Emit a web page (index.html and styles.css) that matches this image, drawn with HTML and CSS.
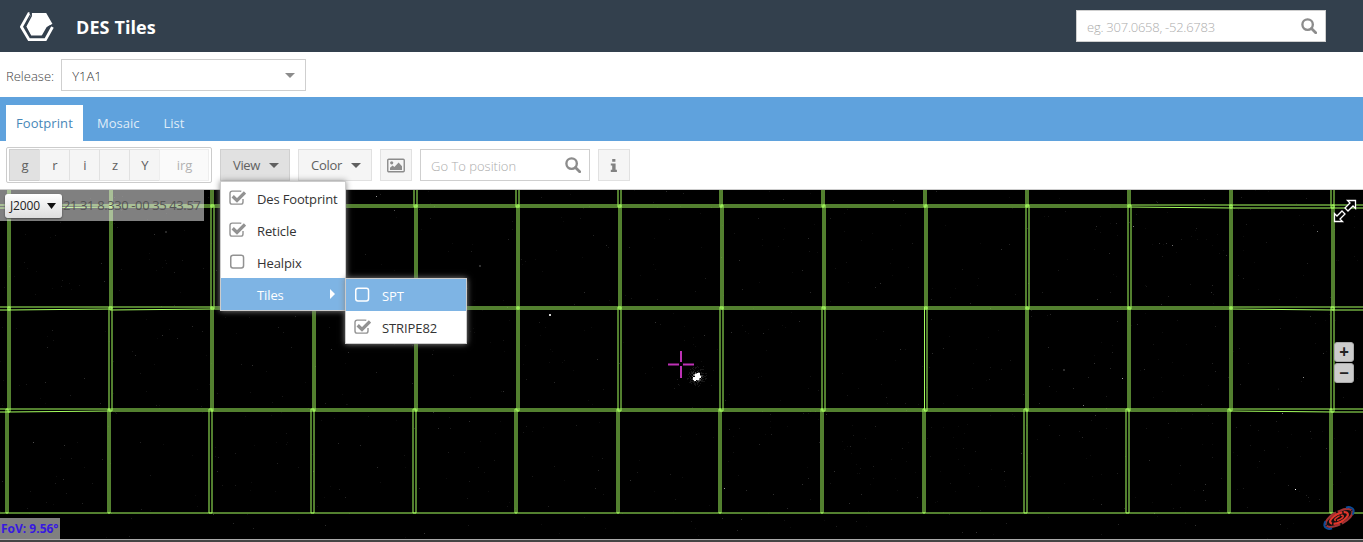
FILE: index.html
```html
<!DOCTYPE html>
<html lang="en">
<head>
<meta charset="utf-8">
<title>DES Tiles</title>
<link rel="stylesheet" href="styles.css">
</head>
<body>
<svg class="defs" width="0" height="0" aria-hidden="true">
  <symbol id="search" viewBox="0 0 15 15"><circle cx="6.2" cy="6.2" r="4.9" fill="none" stroke="currentColor" stroke-width="2.2"/><path d="M9.8 9.8l4 4" stroke="currentColor" stroke-width="2.6" stroke-linecap="round"/></symbol>
  <symbol id="caret" viewBox="0 0 10 5"><path d="M0 0h10L5 5z" fill="currentColor"/></symbol>
  <symbol id="box" viewBox="0 0 17 15"><rect x="1.75" y="1.25" width="12.8" height="12.8" rx="2.2" fill="none" stroke="currentColor" stroke-width="1.5"/></symbol>
  <symbol id="checked" viewBox="0 0 17 15"><path d="M12.3 1.400Q11.8 1.100 11 1.100H3.200Q1 1.100 1 3.300V11.900Q1 14.100 3.200 14.100H11.800Q14 14.100 14 11.900V9" fill="none" stroke="currentColor" stroke-width="1.400"/><path d="M3.700 6.300l4.300 4.200L16 2.500" fill="none" stroke="currentColor" stroke-width="3.300"/></symbol>
</svg>
<header class="header">
  <svg class="logo" width="34" height="30" viewBox="0 0 34 30">
    <path d="M11.500 1h14.700l6.300 11-5.800 3-5.200 9H11L6 14.500z" fill="#fff"/>
    <path d="M9.500 1.600H8.800L1.400 14.800 9 27.600h16.500l7-12.600" fill="none" stroke="#fff" stroke-width="2.800"/>
    <path d="M11.200 0v4L5.500 14.600l5.200 9.600h13l5.300-9.600 4.800-2.200" fill="none" stroke="#34404e" stroke-width="1.400"/>
  </svg>
  <h1 class="title">DES Tiles</h1>
  <div class="field header-search"><span>eg. 307.0658, -52.6783</span><svg width="16" height="16"><use href="#search"/></svg></div>
</header>
<div class="release">
  <label>Release:</label>
  <div class="field combo"><span>Y1A1</span><svg width="10" height="5"><use href="#caret"/></svg></div>
</div>
<nav class="tabs"><a class="tab active">Footprint</a><a class="tab">Mosaic</a><a class="tab">List</a></nav>
<div class="toolbar">
  <div class="bands"><b class="btn pressed">g</b><b class="btn">r</b><b class="btn">i</b><b class="btn">z</b><b class="btn">Y</b><b class="btn off">irg</b></div>
  <div class="menu-anchor">
    <button class="btn pressed view">View<svg width="10" height="5"><use href="#caret"/></svg></button>
    <div class="menu view-menu">
      <div class="item"><svg width="17" height="15"><use href="#checked"/></svg><span class="long">Des Footprint</span></div>
      <div class="item"><svg width="17" height="15"><use href="#checked"/></svg><span>Reticle</span></div>
      <div class="item"><svg width="17" height="15"><use href="#box"/></svg><span>Healpix</span></div>
      <div class="item selected"><svg width="17" height="15"></svg><span>Tiles</span><svg class="arrow" width="5" height="10"><path d="M0 0l5 5-5 5z" fill="#fff"/></svg></div>
    </div>
    <div class="menu sub-menu">
      <div class="item selected"><svg width="17" height="15"><use href="#box"/></svg><span>SPT</span></div>
      <div class="item"><svg width="17" height="15"><use href="#checked"/></svg><span>STRIPE82</span></div>
    </div>
  </div>
  <button class="btn color">Color<svg width="10" height="5"><use href="#caret"/></svg></button>
  <button class="btn square"><svg width="18" height="15" viewBox="0 0 18 15"><rect x=".75" y="1.25" width="16.5" height="12.5" rx="1" fill="none" stroke="#8c8c8c" stroke-width="1.4"/><circle cx="4.7" cy="4.8" r="1.6" fill="#8c8c8c"/><path d="M3 12V9.8l2.600-2.200 1.800 1.400 4.200-4.400L15 8.300V12z" fill="#8c8c8c"/></svg></button>
  <div class="field goto"><span>Go To position</span><svg width="16" height="16"><use href="#search"/></svg></div>
  <button class="btn square"><svg width="8" height="13" viewBox="0 0 8 13"><path d="M2.200 0h3.200v2.700H2.200zM.8 4.400h4.800v6.400h1.300V13H.8v-2.200h1.400V6.600H.8z" fill="#828282"/></svg></button>
</div>
<main class="map">
  <svg class="sky" id="sky" width="1363" height="349" viewBox="0 190 1363 349"></svg>
  <div class="location"><span class="frame">J2000<svg width="9" height="6"><path d="M0 0h9L4.500 6z" fill="#111"/></svg></span><span class="coords">21 31 8.330 -00 35 43.57</span></div>
  <svg class="expand" width="24" height="24" viewBox="0 0 24 24"><path d="M14.500 1.500h8v8l-2.500-2.500-5 5-3-3 5-5zM1.500 14.500v8h8l-2.500-2.500 5-5-3-3-5 5z" fill="#000" stroke="#fff" stroke-width="1.300"/></svg>
  <div class="zoom"><b>+</b><b>−</b></div>
  <svg class="galaxy" width="38" height="28" viewBox="-19 -14 38 28" fill="none">
    <g transform="rotate(-28)">
      <ellipse rx="16.500" ry="7" fill="#111"/>
      <ellipse rx="14.800" ry="6.200" stroke="#a23234" stroke-width="2.200" stroke-dasharray="17 2 14 1"/>
      <path d="M-13.500-3.500Q-18.500 0-15.500 3.500-14 5.500-11 5.800M13.500 3.500Q18.500 0 15.500-3.500 14-5.500 11-5.800" stroke="#0d4b96" stroke-width="2"/>
      <ellipse rx="9.800" ry="4.200" stroke="#e0352b" stroke-width="2.200" stroke-dasharray="19 1.500"/>
      <ellipse rx="4.700" ry="1.600" stroke="#e0352b" stroke-width="1.500" stroke-dasharray="8 1"/>
    </g>
  </svg>
  <div class="fov">FoV: 9.56°</div>
</main>
<script src="sky.js"></script>
</body>
</html>
```
FILE: styles.css
```css
* { box-sizing: border-box; }
body { margin: 0; width: 1363px; height: 542px; overflow: hidden; display: flex; flex-direction: column; background: #fff; color: #444; font: 300 13px/17px "Open Sans", sans-serif; }
svg { display: block; flex: none; }
.defs { position: absolute; }
button { font: inherit; color: inherit; }
.header { height: 52px; flex: none; display: flex; align-items: center; background: #33404d; padding: 0 37px 0 20px; }
.logo { margin-top: 2px; }
.title { margin: 2px auto 0 22px; color: #fff; font-size: 18px; line-height: 24px; font-weight: 700; letter-spacing: .1px; }
.field { height: 32px; display: flex; align-items: center; justify-content: space-between; border: 1px solid #cfcfcf; background: #fff; padding: 0 8px 0 10px; color: #acacac; }
.field span { padding-top: 2px; }
.field svg { color: #8c8c8c; }
.header-search { width: 250px; }
.header-search span { letter-spacing: -.25px; }
.release { height: 45px; flex: none; display: flex; align-items: center; gap: 7px; padding: 1px 6px 0; }
.release label { padding-top: 3px; }
.combo { width: 245px; color: #333; padding-right: 10px; }
.tabs { height: 44px; flex: none; display: flex; align-items: flex-end; gap: 4px; background: #5fa2dd; padding-left: 6px; }
.tab { height: 36px; padding: 10px 10px 0; color: #dfecf8; font-weight: 400; }
.tab.active { width: 77px; background: #fff; color: #4887b8; letter-spacing: .08px; }
.toolbar { height: 49px; flex: none; display: flex; align-items: center; gap: 8px; padding: 0 6px; border-bottom: 1px solid #ccc; }
.btn { height: 32px; display: flex; align-items: center; justify-content: center; margin: 0; padding: 0; background: #f5f5f5; border: 1px solid #e1e1e1; color: #606060; font-weight: 400; }
.btn.pressed { background: #e1e1e1; border-color: #d0d0d0; }
.bands { height: 36px; width: 206px; display: flex; border: 1px solid #ccc; border-radius: 2px; padding: 1px 2px; }
.bands .btn { width: 31px; margin-right: -1px; padding-left: 1px; }
.bands .btn.off { width: 50px; margin: 0; color: #b2b2b2; background: #fafafa; border-color: #eee; }
.menu-anchor { position: relative; z-index: 2; }
.view { width: 70px; gap: 9px; letter-spacing: -.4px; padding-left: 2px; }
.color { width: 74px; gap: 9px; letter-spacing: -.3px; padding-left: 2px; }
.square { width: 32px; }
.goto { width: 170px; }
.menu { position: absolute; background: #fff; border: 1px solid #ccc; color: #333; box-shadow: 0 0 6px #888; }
.view-menu { left: 0; top: 32px; width: 126px; }
.sub-menu { left: 125px; top: 129px; width: 122px; }
.item { height: 32px; display: flex; align-items: center; padding-left: 8px; gap: 11px; font-weight: 400; white-space: nowrap; letter-spacing: -.1px; }
.long { letter-spacing: -.15px; }
.item svg { color: #929292; margin-top: -1px; }
.item span { padding-top: 2px; }
.item.selected { background: #7eb4e4; color: #fff; }
.item.selected svg { color: #fff; }
.item .arrow { margin: 0 10px 0 auto; }
.map { position: relative; height: 352px; flex: none; background: #000; border-bottom: 3px solid #454545; }
.map::after { content: ""; position: absolute; left: 0; right: 0; bottom: -1px; height: 1px; background: #aaa; }
.location { position: absolute; left: 0; top: 0; width: 204px; height: 31px; display: flex; align-items: center; background: rgba(255,255,255,.5); }
.frame { width: 57px; height: 24px; flex: none; margin: 0 1px 0 5px; display: flex; align-items: center; justify-content: space-between; padding: 0 6px 0 5px; border-radius: 3px; background: linear-gradient(#fff, #ddd); color: #222; font-weight: 400; font-size: 12px; letter-spacing: -.15px; box-shadow: 0 1px 2px #444; }
.coords { color: #555; font-weight: 400; white-space: nowrap; letter-spacing: -.39px; }
.expand { position: absolute; left: 1333px; top: 9px; }
.zoom { position: absolute; left: 1334px; top: 152px; display: grid; gap: 1px; }
.zoom b { width: 20px; height: 20px; border: 1px solid #aaa; border-radius: 3px; background: #ccc; color: #222; text-align: center; font-size: 17px; line-height: 18px; font-weight: 700; }
.galaxy { position: absolute; left: 1320px; top: 314px; }
.fov { position: absolute; left: 0; bottom: 0; width: 60px; height: 21px; background: #808080; color: #3719e0; padding-left: 1px; font-size: 12px; line-height: 21px; font-weight: 700; white-space: nowrap; }
```
FILE: sky.js
```js
const sky = document.getElementById('sky');
let out = '';
let seed = 7;
function random() {
  seed = (seed * 16807) % 2147483647;
  return seed / 2147483647;
}
// Faint background stars
for (let i = 0; i < 900; i++) {
  const x = Math.floor(random() * 1363), y = Math.floor(190 + random() * 349);
  const v = Math.floor(12 + 40 * Math.pow(random(), 3));
  out += `<rect x="${x}" y="${y}" width="1" height="1" fill="rgb(${v},${v},${v})"/>`;
}
// Brighter stars: x, y, size, level
[[549, 314, 2, 210], [376, 196, 1, 150], [1317, 231, 1, 120], [1295, 489, 1, 255], [724, 488, 1, 150],
 [1122, 378, 1, 160], [1083, 405, 1, 120], [1303, 377, 1, 140], [1133, 226, 1, 120], [1172, 245, 1, 110],
 [479, 265, 2, 50], [394, 210, 1, 80], [1063, 369, 2, 45], [1282, 413, 1, 120], [33, 442, 1, 80], [165, 231, 2, 40]
].forEach(([x, y, s, v]) => { out += `<rect x="${x}" y="${y}" width="${s}" height="${s}" fill="rgb(${v},${v},${v})"/>`; });
// Globular cluster
for (let i = 0; i < 280; i++) {
  const r = 10 * Math.pow(random(), 1.3), a = random() * 6.283;
  const v = Math.floor(Math.max(22, 240 - r * 36));
  out += `<rect x="${Math.floor(697 + r * Math.cos(a))}" y="${Math.floor(376.500 + r * Math.sin(a))}" width="1" height="1" fill="rgb(${v},${v},${v})"/>`;
}
out += '<path d="M695 374h2v-1h3v3h1v2h-2v2h-3v1h-2v-1h-1v-3h2z" fill="#fff"/>';
// Overlapping survey tiles. Each boundary is [left edge of this tile, right edge of the one before].
const rows = [
  { top: 103, bottom: 207, xs: [[8, 10], [110, 112], [211, 213], [313, 315], [414, 417], [516, 519], [618, 621], [720, 722], [822, 824], [924, 926], [1026, 1028], [1128, 1130], [1230, 1232], [1331, 1334]] },
  { top: 205, bottom: 309, xs: [[8, 10], [110, 112], [211, 214], [313, 315], [415, 417], [517, 519], [619, 621], [721, 723], [823, 825], [925, 927], [1026, 1029], [1128, 1131], [1230, 1232], [1332, 1334]] },
  { top: 307, bottom: 411, xs: [[8, 10], [109, 112], [211, 213], [313, 315], [415, 417], [517, 519], [618, 621], [720, 723], [822, 825], [924.500, 927], [1026, 1028], [1128, 1130], [1230, 1232], [1331, 1334]] },
  { top: 409, bottom: 513, xs: [[6, 8], [108, 110], [209, 212], [311, 314], [413, 416], [515, 517], [617, 619], [719, 721], [821, 823], [923, 925], [1024, 1027], [1126, 1129], [1228, 1230], [1330, 1332]] }
];
rows.forEach(({ top, bottom, xs }, r) => {
  for (let c = -1; c < xs.length; c++) {
    const left = c < 0 ? -94 : xs[c][0];
    const right = c + 1 < xs.length ? xs[c + 1][1] : 1436;
    const edge = r === 0 ? 11 : 12;
    const bl = bottom + (r < 3 && (c > edge || c < (r === 1 ? 2 : 1)) ? 1 : 0);
    const br = bottom + (r < 3 && (c >= edge || c < 0) ? 1 : 0);
    out += `<path d="M${left} ${top}H${right}V${br}L${left} ${bl}Z" fill="none" stroke="#a5ff5e"/>`;
  }
});
out += '<path d="M668 364.500h11m4 0h11M681 351v11m0 4v12" stroke="#bd31b5" stroke-width="2"/>';
sky.innerHTML = out;
```
